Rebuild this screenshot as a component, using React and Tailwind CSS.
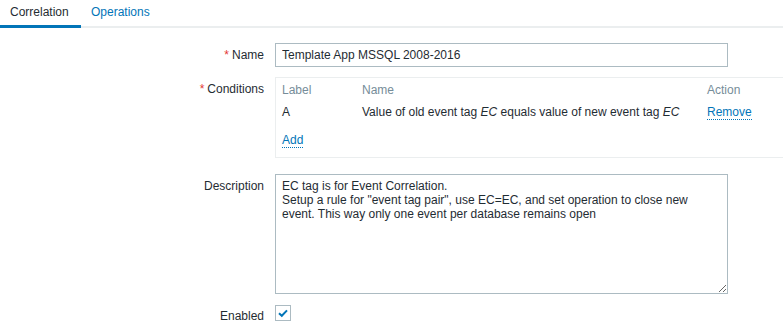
import React from 'react';

function Label({ children, required }) {
  return (
    <div className="pt-[5px] text-right leading-[14px] pr-[1px]">
      {required && <span className="text-[#e33734] mr-[3px]">*</span>}
      {children}
    </div>
  );
}

export default function App() {
  return (
    <div
      className="w-[783px] h-[331px] overflow-hidden bg-white text-[12px] text-[#1f2c33]"
      style={{ fontFamily: '"Liberation Sans", Arial, sans-serif' }}
    >
      {/* tabs */}
      <div className="flex h-[28px] border-b-2 border-[#ebeeef]">
        <div className="h-[28px] w-[81px] pl-[10px] pt-[5px] leading-[14px] border-b-[3px] border-[#0275b8]">
          Correlation
        </div>
        <div className="pl-[10px] pt-[5px] leading-[14px] text-[#0275b8]">Operations</div>
      </div>

      <div className="grid grid-cols-[265px_1fr] gap-x-[10px] mt-[15px]">
        <Label required>Name</Label>
        <div>
          <input
            readOnly
            defaultValue="Template App MSSQL 2008-2016"
            className="w-[453px] h-[24px] border border-[#acbbc2] px-[6px] text-[12px] text-[#1f2c33] outline-none"
            style={{ fontFamily: '"Liberation Sans", Arial, sans-serif' }}
          />
        </div>

        <div className="mt-[10px]">
          <Label required>Conditions</Label>
        </div>
        <div className="mt-[10px]">
          <div className="w-[560px] h-[81px] border border-[#ebeeef] px-[6px] pt-[5px] leading-[14px]">
            <div className="flex text-[#768d99]">
              <div className="w-[80px]">Label</div>
              <div className="w-[345px]">Name</div>
              <div>Action</div>
            </div>
            <div className="flex mt-[8px]">
              <div className="w-[80px]">A</div>
              <div className="w-[345px]">
                Value of old event tag <i>EC</i> equals value of new event tag <i>EC</i>
              </div>
              <div>
                <span className="text-[#0275b8] border-b border-dotted border-[#0275b8]">Remove</span>
              </div>
            </div>
            <div className="mt-[14px]">
              <span className="text-[#0275b8] border-b border-dotted border-[#0275b8]">Add</span>
            </div>
          </div>
        </div>

        <div className="mt-[16px]">
          <Label>Description</Label>
        </div>
        <div className="mt-[16px]">
          <textarea
            readOnly
            defaultValue={
              'EC tag is for Event Correlation.\nSetup a rule for "event tag pair", use EC=EC, and set operation to close new event. This way only one event per database remains open'
            }
            className="block w-[453px] h-[120px] border border-[#acbbc2] px-[6px] py-[4px] text-[12px] leading-[14px] text-[#1f2c33] outline-none"
            style={{ fontFamily: '"Liberation Sans", Arial, sans-serif' }}
          />
        </div>

        <div className="mt-[10px]">
          <Label>Enabled</Label>
        </div>
        <div className="mt-[10px] pt-[1px]">
          <div className="w-[16px] h-[16px] border border-[#acbbc2] flex items-center justify-center">
            <svg width="12" height="12" viewBox="0 0 12 12">
              <path d="M2 6.2 L4.8 8.8 L10 3.4" fill="none" stroke="#0275b8" strokeWidth="2" />
            </svg>
          </div>
        </div>
      </div>
    </div>
  );
}
